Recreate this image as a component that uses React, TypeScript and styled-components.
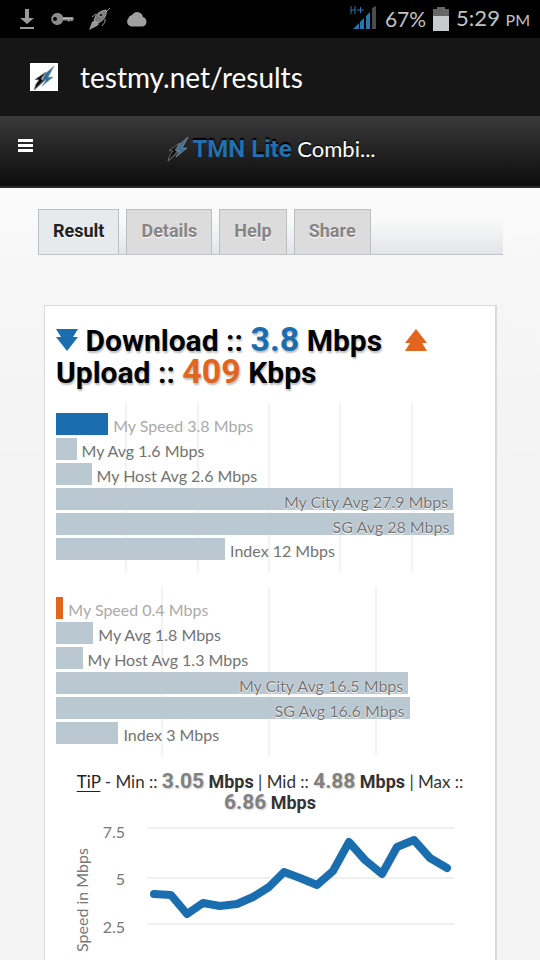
import React from "react";
import styled, { createGlobalStyle } from "styled-components";

const BLUE = "#1a6daf";
const ORANGE = "#e2651d";
const HAND = '"Lato", "Open Sans", sans-serif';

const GlobalStyle = createGlobalStyle`
  *, *::before, *::after { box-sizing: border-box; }
  body { margin: 0; background: #f5f5f5; font-family: ${HAND}; }
  h1, h2, p, ul { margin: 0; padding: 0; }
  button, input { font: inherit; border: 0; padding: 0; margin: 0; background: none; color: inherit; }
`;

const Screen = styled.div`
  height: 100vh;
  overflow: hidden;
  background: linear-gradient(#fbfbfb 188px, #f6f6f6 280px, #f3f3f3 480px);
`;

const StatusBar = styled.div`
  display: flex;
  align-items: center;
  justify-content: space-between;
  height: 38px;
  padding: 0 10px 0 18px;
  background: #000;
  color: #c2c2c2;
`;

const StatusGroup = styled.div<{ $gap: number }>`
  display: flex;
  align-items: center;
  gap: ${(p) => p.$gap}px;
`;

const StatusText = styled.span`
  font-size: 21px;
  line-height: 38px;
`;

const Clock = styled(StatusText)`
  font-size: 22px;
`;

const Meridiem = styled.small`
  font-size: 16px;
`;

const AddressBar = styled.div`
  display: flex;
  align-items: center;
  gap: 22px;
  height: 78px;
  padding: 0 30px;
  background: #161616;
  color: #fff;
`;

const Favicon = styled.span`
  display: flex;
  flex: none;
  width: 28px;
  height: 28px;
  background: #fff;
`;

const AddressInput = styled.input`
  flex: 1;
  min-width: 0;
  font-size: 28px;
  line-height: 36px;
`;

const SiteHeader = styled.header`
  display: grid;
  grid-template-columns: 50px 1fr 50px;
  align-items: center;
  height: 72px;
  padding-bottom: 4px;
  background: linear-gradient(#3a3a3a, #252525 45%, #101010 92%);
  border-bottom: 2px solid #2b2b2b;
`;

const MenuButton = styled.button`
  display: flex;
  justify-content: center;
  padding-bottom: 6px;
  color: #fff;
`;

const SiteTitle = styled.h1`
  display: flex;
  align-items: center;
  justify-content: center;
  font-size: 22px;
  font-weight: 400;
  line-height: 32px;
  color: #fff;
  white-space: pre;
  text-shadow: 0 -1px 1px #000;
`;

const Brand = styled.span`
  font-family: Roboto, sans-serif;
  font-weight: 700;
  font-size: 24px;
  color: #2270ae;
  text-shadow: 0 -2px 1px #000;
`;

const TabList = styled.div`
  display: flex;
  gap: 7px;
  margin: 21px 37px 50px 38px;
  background: linear-gradient(#fafafa 20%, #e2e5e8);
  border-bottom: 1px solid #bfc5c7;
`;

const Tab = styled.button<{ $active?: boolean }>`
  height: 45px;
  padding: 0 14px 3px;
  border: 1px solid #b9c0c1;
  border-bottom: 0;
  background: ${(p) => (p.$active ? "#e7eaec" : "#dcdcdc")};
  color: ${(p) => (p.$active ? "#222" : "#858585")};
  font-family: Roboto, sans-serif;
  font-size: 18px;
  font-weight: 700;
  text-shadow: 0 1px 0 #fff;
`;

const Card = styled.main`
  margin: 0 43px 0 44px;
  padding: 19px 11px 0;
  background: #fff;
  border: 1px solid #d8dadb;
  border-right-width: 2px;
`;

const Summary = styled.h2`
  font-family: Roboto, sans-serif;
  font-size: 30px;
  font-weight: 700;
  line-height: 32px;
  color: #000;
  text-shadow: 1px 2px 2px #bbb;
`;

const Figure = styled.span<{ $color: string }>`
  font-size: 34px;
  line-height: 24px;
  color: ${(p) => p.$color};
`;

const Bars = styled.ul<{ $columns: number }>`
  display: grid;
  gap: 3px;
  margin-bottom: 15px;
  padding: 10px 0 12px;
  list-style: none;
  background: repeating-linear-gradient(
    to right,
    transparent 0,
    transparent calc(100% / ${(p) => p.$columns} - 2px),
    #f3f3f3 calc(100% / ${(p) => p.$columns} - 2px),
    #f3f3f3 calc(100% / ${(p) => p.$columns})
  );
  box-shadow: inset -3px 0 #fff;
`;

const Charts = styled.section`
  margin-top: 14px;
`;

const BarRow = styled.li`
  display: flex;
  align-items: center;
  gap: 5px;
  height: 22px;
`;

const Bar = styled.span<{ $color: string; $inside?: boolean }>`
  display: flex;
  flex: none;
  justify-content: flex-end;
  height: 22px;
  padding-right: ${(p) => (p.$inside ? 5 : 0)}px;
  background: ${(p) => p.$color};
`;

const BarLabel = styled.span<{ $tone?: "muted" | "inside" }>`
  padding-top: 3px;
  font-size: 16px;
  line-height: 22px;
  white-space: nowrap;
  color: ${(p) => (p.$tone === "muted" ? "#aaa" : "#737373")};
  text-shadow: ${(p) => (p.$tone === "inside" ? "0 1px 1px #fff, 0 0 1px #fff" : "none")};
`;

const Tip = styled.p`
  font-size: 17px;
  line-height: 21px;
  text-align: center;
  color: #333;

  a { color: #222; text-underline-offset: 3px; }
`;

const TipUnit = styled.b`
  font-family: Roboto, sans-serif;
  font-size: 18px;
`;

const TipFigure = styled(TipUnit)`
  font-size: 21px;
  color: #808080;
  text-shadow: 1px 1px 2px #ccc;
`;

const LineChart = styled.svg`
  display: block;
  width: 100%;
  margin-top: 8px;
`;

type Row = { label: string; width: number; inside?: boolean };

const download: Row[] = [
  { label: "My Speed 3.8 Mbps", width: 12.2 },
  { label: "My Avg 1.6 Mbps", width: 4.8 },
  { label: "My Host Avg 2.6 Mbps", width: 8.3 },
  { label: "My City Avg 27.9 Mbps", width: 92.8, inside: true },
  { label: "SG Avg 28 Mbps", width: 93.1, inside: true },
  { label: "Index 12 Mbps", width: 39.5 },
];

const upload: Row[] = [
  { label: "My Speed 0.4 Mbps", width: 1.7 },
  { label: "My Avg 1.8 Mbps", width: 8.7 },
  { label: "My Host Avg 1.3 Mbps", width: 6.2 },
  { label: "My City Avg 16.5 Mbps", width: 82.3, inside: true },
  { label: "SG Avg 16.6 Mbps", width: 82.6, inside: true },
  { label: "Index 3 Mbps", width: 14.6 },
];

function BarChart({ rows, color, columns }: { rows: Row[]; color: string; columns: number }) {
  return (
    <Bars $columns={columns}>
      {rows.map((row, i) => (
        <BarRow key={row.label}>
          <Bar $color={i === 0 ? color : "#bac8d1"} $inside={row.inside} style={{ width: `${row.width}%` }}>
            {row.inside && <BarLabel $tone="inside">{row.label}</BarLabel>}
          </Bar>
          {!row.inside && <BarLabel $tone={i === 0 ? "muted" : undefined}>{row.label}</BarLabel>}
        </BarRow>
      ))}
    </Bars>
  );
}

function BoltLogo({ dark }: { dark?: boolean }) {
  return (
    <svg width="28" height="30" viewBox="0 0 28 28" aria-hidden="true">
      <path d="M16 8 5 15.500l4 .5-3 4-2 6L15 16l-4-1z" fill="#0b0d10" stroke={dark ? "#8a8a8a" : "#777"} strokeWidth=".7" />
      <path d="M24 2 15 10l-3 6h4l-4 6L23 13l-5 .3z" fill="#2b6fa6" stroke={dark ? "#999" : "#7998ad"} strokeWidth=".7" />
      <path d="M24 2 4 27l10-10z" fill={dark ? "#777" : "#5b6670"} opacity=".6" />
    </svg>
  );
}

function DownloadIcon() {
  return (
    <svg width="18" height="22" viewBox="0 0 18 22" aria-hidden="true">
      <path d="M7 1h4v9h5l-7 6-7-6h5zM2 19h14v2H2z" fill="#9a9a9a" />
    </svg>
  );
}

function KeyIcon() {
  return (
    <svg width="23" height="14" viewBox="0 0 23 14" aria-hidden="true">
      <path fillRule="evenodd" d="M6.500 1a6 6 0 0 1 5.600 4H22l1 2-2 2.500-2-1-1 1.500-2-1.500h-4A6 6 0 1 1 6.500 1zM4 5a2 2 0 1 0 0 4 2 2 0 0 0 0-4z" fill="#8c8c8c" />
      <path d="M12 6.500h9" stroke="#bbb" />
    </svg>
  );
}

function RocketIcon() {
  return (
    <svg width="22" height="22" viewBox="0 0 22 22" aria-hidden="true">
      <path d="M6 10c1-4 5-7 11-8 1 4-1 9-6 12l-3 1-3-3z" fill="#777" stroke="#aaa" />
      <circle cx="12" cy="7" r="2" fill="#222" stroke="#aaa" />
      <path d="M0 22 3 14l3-2 4 4-2 2z" fill="#999" />
      <path d="M3 9l4-3M13 18l3-4v-3M17 4l4-4" fill="none" stroke="#999" />
    </svg>
  );
}

function CloudIcon() {
  return (
    <svg width="22" height="16" viewBox="0 0 22 16" aria-hidden="true">
      <path d="M5 15.500A5 5 0 0 1 2.500 7 4 4 0 0 1 6 4a6 6 0 0 1 11 2 5 5 0 0 1 0 9.500z" fill="#a0a0a0" />
    </svg>
  );
}

function SignalIcon() {
  return (
    <svg width="28" height="28" viewBox="0 0 28 28" aria-hidden="true">
      <path d="M1 1v8M5 1v8M1 5h4M7 5h7M10.500 2v6" fill="none" stroke="#2b77b3" />
      <path d="M3 24l6-6v6zM10 17l4-4v11h-4zM16 11l4-4v17h-4z" fill="#2875b2" />
      <path d="M22 3l4-2v23h-4z" fill="#4b4b4b" />
    </svg>
  );
}

function BatteryIcon() {
  return (
    <svg width="16" height="24" viewBox="0 0 16 24" aria-hidden="true">
      <path d="M4 0h8v2h4v7H0V2h4z" fill="#666" />
      <path d="M0 9h16v15H0z" fill="#c8cacd" />
    </svg>
  );
}

function SpeedArrow({ up }: { up?: boolean }) {
  return (
    <svg width="22" height="22" viewBox="0 0 22 22" role="img" aria-label={up ? "Upload" : "Download"}>
      <path
        d="M0 0h22l-5 8h5L11 22 0 8h5z"
        transform={up ? "rotate(180 11 11)" : undefined}
        fill={up ? ORANGE : BLUE}
      />
    </svg>
  );
}

const POINTS =
  "98,73 115,74 131,93 147,82 164,85 181,83 197,76 213,66 228,51 244,57 261,64 277,50 293,21 309,39 326,53 341,26 358,19 374,37 391,47";

export default function App() {
  return (
    <>
      <GlobalStyle />
      <Screen>
        <StatusBar>
          <StatusGroup $gap={15}>
            <DownloadIcon />
            <KeyIcon />
            <RocketIcon />
            <CloudIcon />
          </StatusGroup>
          <StatusGroup $gap={7}>
            <SignalIcon />
            <StatusText>67%</StatusText>
            <BatteryIcon />
            <Clock>
              5:29 <Meridiem>PM</Meridiem>
            </Clock>
          </StatusGroup>
        </StatusBar>
        <AddressBar>
          <Favicon>
            <BoltLogo />
          </Favicon>
          <AddressInput type="text" aria-label="Address" defaultValue="testmy.net/results" />
        </AddressBar>
        <SiteHeader>
          <MenuButton aria-label="Menu">
            <svg width="15" height="14" viewBox="0 0 15 14" aria-hidden="true">
              <path d="M0 0h15v3H0zM0 5h15v3H0zM0 10h15v3H0z" fill="currentColor" />
            </svg>
          </MenuButton>
          <SiteTitle>
            <BoltLogo dark />
            <Brand>TMN Lite</Brand> Combi...
          </SiteTitle>
        </SiteHeader>
        <TabList role="tablist">
          <Tab role="tab" aria-selected="true" $active>Result</Tab>
          <Tab role="tab" aria-selected="false">Details</Tab>
          <Tab role="tab" aria-selected="false">Help</Tab>
          <Tab role="tab" aria-selected="false">Share</Tab>
        </TabList>
        <Card>
          <Summary>
            <SpeedArrow /> Download :: <Figure $color={BLUE}>3.8</Figure> Mbps &nbsp;&nbsp;<SpeedArrow up /> Upload ::{" "}
            <Figure $color={ORANGE}>409</Figure> Kbps
          </Summary>
          <Charts>
            <BarChart rows={download} color={BLUE} columns={6} />
            <BarChart rows={upload} color={ORANGE} columns={4} />
          </Charts>
          <Tip>
            <a href="#tip">TiP</a> - Min :: <TipFigure>3.05</TipFigure> <TipUnit>Mbps</TipUnit> | Mid ::{" "}
            <TipFigure>4.88</TipFigure> <TipUnit>Mbps</TipUnit> | Max :: <TipFigure>6.86</TipFigure>{" "}
            <TipUnit>Mbps</TipUnit>
          </Tip>
          <LineChart viewBox="0 0 428 240" role="img" aria-label="Speed in Mbps">
            <path d="M91 7h307M91 57h307M91 103h307M91 151h307M91 199h307" stroke="#e0e0e0" strokeWidth="1" />
            <g fontFamily="Lato, sans-serif" fontSize="16" fill="#777" textAnchor="end">
              <text x="69" y="17">7.5</text>
              <text x="69" y="64">5</text>
              <text x="69" y="112">2.5</text>
            </g>
            <text transform="translate(32 79) rotate(-90)" textAnchor="middle" fontFamily="Lato, sans-serif" fontSize="16" fill="#777">
              Speed in Mbps
            </text>
            <polyline points={POINTS} fill="none" stroke={BLUE} strokeWidth="8" strokeLinecap="round" strokeLinejoin="round" />
          </LineChart>
        </Card>
      </Screen>
    </>
  );
}
